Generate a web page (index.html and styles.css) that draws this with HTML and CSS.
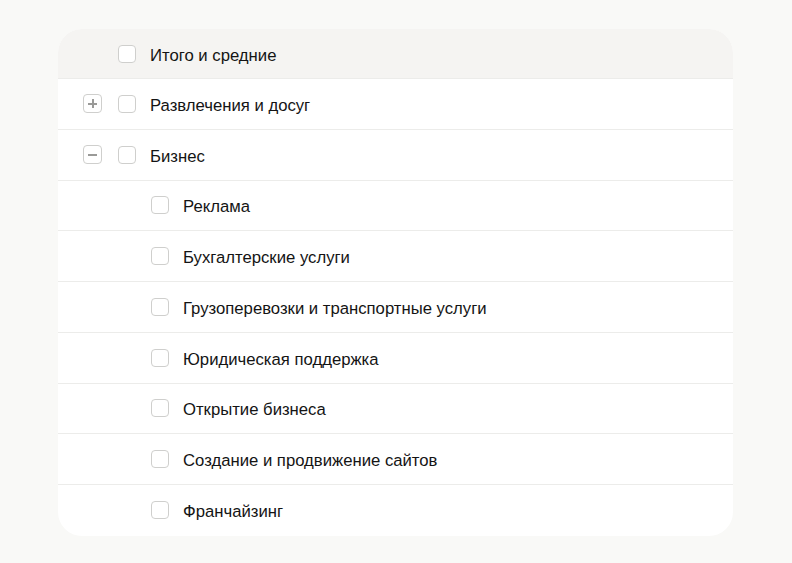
FILE: index.html
```html
<!DOCTYPE html>
<html lang="ru">
<head>
<meta charset="utf-8">
<title>Категории</title>
<link rel="stylesheet" href="styles.css">
</head>
<body>
	<div class="tree">
		<div class="row head">
			<span class="tgl empty"></span>
			<span class="chk"></span>
			<span class="txt">Итого и средние</span>
		</div>
		<div class="row">
			<span class="tgl plus"></span>
			<span class="chk"></span>
			<span class="txt">Развлечения и досуг</span>
		</div>
		<div class="row">
			<span class="tgl minus"></span>
			<span class="chk"></span>
			<span class="txt">Бизнес</span>
		</div>
		<div class="row sub">
			<span class="chk"></span>
			<span class="txt">Реклама</span>
		</div>
		<div class="row sub">
			<span class="chk"></span>
			<span class="txt">Бухгалтерские услуги</span>
		</div>
		<div class="row sub">
			<span class="chk"></span>
			<span class="txt">Грузоперевозки и транспортные услуги</span>
		</div>
		<div class="row sub">
			<span class="chk"></span>
			<span class="txt">Юридическая поддержка</span>
		</div>
		<div class="row sub">
			<span class="chk"></span>
			<span class="txt">Открытие бизнеса</span>
		</div>
		<div class="row sub">
			<span class="chk"></span>
			<span class="txt">Создание и продвижение сайтов</span>
		</div>
		<div class="row sub last">
			<span class="chk"></span>
			<span class="txt">Франчайзинг</span>
		</div>
	</div>
</body>
</html>
```

FILE: styles.css
```css
*{ margin:0; padding:0; box-sizing:border-box;}
body{ background:#f9f9f7; font-family:"Liberation Sans", Arial, sans-serif; font-size:16.7px; color:#141414;}
.tree{ width:675px; margin:29px 0 0 58px; background:#fff; border-radius:24px; overflow:hidden;}
.row{ display:flex; align-items:center; height:50.75px; padding-left:25px; border-bottom:1px solid #ececea;}
.row.head{ height:50px; background:#f5f4f2;}
.row.last{ border-bottom:none;}
.row.sub{ padding-left:93px;}
.tgl{ width:19px; height:19px; margin-right:16px; border:1px solid #cfcfcd; border-radius:4px; position:relative; flex:none;}
.tgl.empty{ border-color:transparent;}
.tgl.plus:before, .tgl.minus:before, .tgl.plus:after{ content:''; position:absolute; left:4px; top:7.5px; width:9px; height:2px; background:#9a9a98;}
.tgl.plus:after{ left:7.5px; top:4px; width:2px; height:9px;}
.chk{ width:18px; height:18px; background:#fff; border:1px solid #cfcfcd; border-radius:4px; margin-right:14px; flex:none;}
.txt{ line-height:20px; position:relative; top:2px;}
```
